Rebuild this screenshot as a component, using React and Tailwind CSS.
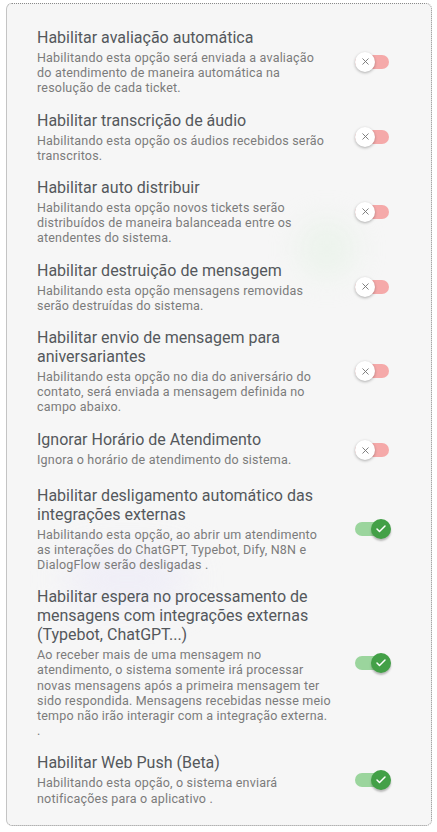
import { Check, X } from "lucide-react";

const opcoes = [
  {
    titulo: "Habilitar avaliação automática",
    texto:
      "Habilitando esta opção será enviada a avaliação do atendimento de maneira automática na resolução de cada ticket.",
    ativo: false,
  },
  {
    titulo: "Habilitar transcrição de áudio",
    texto: "Habilitando esta opção os áudios recebidos serão transcritos.",
    ativo: false,
  },
  {
    titulo: "Habilitar auto distribuir",
    texto:
      "Habilitando esta opção novos tickets serão distribuídos de maneira balanceada entre os atendentes do sistema.",
    ativo: false,
  },
  {
    titulo: "Habilitar destruição de mensagem",
    texto: "Habilitando esta opção mensagens removidas serão destruídas do sistema.",
    ativo: false,
  },
  {
    titulo: "Habilitar envio de mensagem para aniversariantes",
    texto:
      "Habilitando esta opção no dia do aniversário do contato, será enviada a mensagem definida no campo abaixo.",
    ativo: false,
  },
  {
    titulo: "Ignorar Horário de Atendimento",
    texto: "Ignora o horário de atendimento do sistema.",
    ativo: false,
  },
  {
    titulo: "Habilitar desligamento automático das integrações externas",
    texto:
      "Habilitando esta opção, ao abrir um atendimento as interações do ChatGPT, Typebot, Dify, N8N e DialogFlow serão desligadas .",
    ativo: true,
  },
  {
    titulo:
      "Habilitar espera no processamento de mensagens com integrações externas (Typebot, ChatGPT...)",
    texto:
      "Ao receber mais de uma mensagem no atendimento, o sistema somente irá processar novas mensagens após a primeira mensagem ter sido respondida. Mensagens recebidas nesse meio tempo não irão interagir com a integração externa. .",
    ativo: true,
    largura: "w-[295px]",
  },
  {
    titulo: "Habilitar Web Push (Beta)",
    texto: "Habilitando esta opção, o sistema enviará notificações para o aplicativo .",
    ativo: true,
  },
];

// MUI-like switch: 34x14 track, 20px thumb
function Chave({ ativo }) {
  return (
    <div className="relative w-[36px] h-[20px] shrink-0">
      <div
        className={
          ativo
            ? "absolute left-0 top-[3px] w-[34px] h-[14px] rounded-full bg-[#9bd59d]"
            : "absolute left-0 top-[3px] w-[34px] h-[14px] rounded-full bg-[#f5a9a9]"
        }
      />
      {ativo ? (
        <div className="absolute left-[16px] top-0 w-[20px] h-[20px] rounded-full bg-[#43a047] grid place-items-center shadow-[0_2px_2px_rgba(0,0,0,0.25)]">
          <Check size={12} strokeWidth={3} className="text-white" />
        </div>
      ) : (
        <div className="absolute left-0 top-0 w-[20px] h-[20px] rounded-full bg-white grid place-items-center shadow-[0_1px_3px_rgba(0,0,0,0.3)]">
          <X size={11} strokeWidth={2} className="text-[#757575]" />
        </div>
      )}
    </div>
  );
}

export default function App() {
  return (
    <div className="min-h-[832px] bg-white pt-[3px] pl-[6px] font-['Roboto',sans-serif]">
      <div className="relative overflow-hidden w-[426px] h-[823px] bg-[#f6f6f6] rounded-[6px] border border-dotted border-[#8a8a8a] [border-left-style:solid] [border-left-color:#c4c4c4] pt-[24px] pl-[30px]">
        {/* faint background blobs */}
        <div className="absolute left-[290px] top-[215px] w-[60px] h-[60px] rounded-full bg-[#e3f1e3] blur-[14px] opacity-50" />
        <div className="absolute left-[60px] top-[550px] w-[120px] h-[50px] rounded-full bg-[#eceaf8] blur-[18px] opacity-70" />

        <div className="relative w-[354px] flex flex-col gap-[15px]">
          {opcoes.map((o, i) => (
            <div key={i} className="flex items-center min-h-[41px]">
              <div
                className={`${o.largura || "w-[292px]"} self-start flex flex-col gap-[3px]`}
              >
                <div className="text-[16px] leading-[19px] text-[#54585c]">
                  {o.titulo}
                </div>
                <div className="text-[12.5px] leading-[15.2px] tracking-[0.2px] text-[#7b7b7b]">
                  {o.texto}
                </div>
              </div>
              <div className="ml-auto">
                <Chave ativo={o.ativo} />
              </div>
            </div>
          ))}
        </div>
      </div>
    </div>
  );
}
